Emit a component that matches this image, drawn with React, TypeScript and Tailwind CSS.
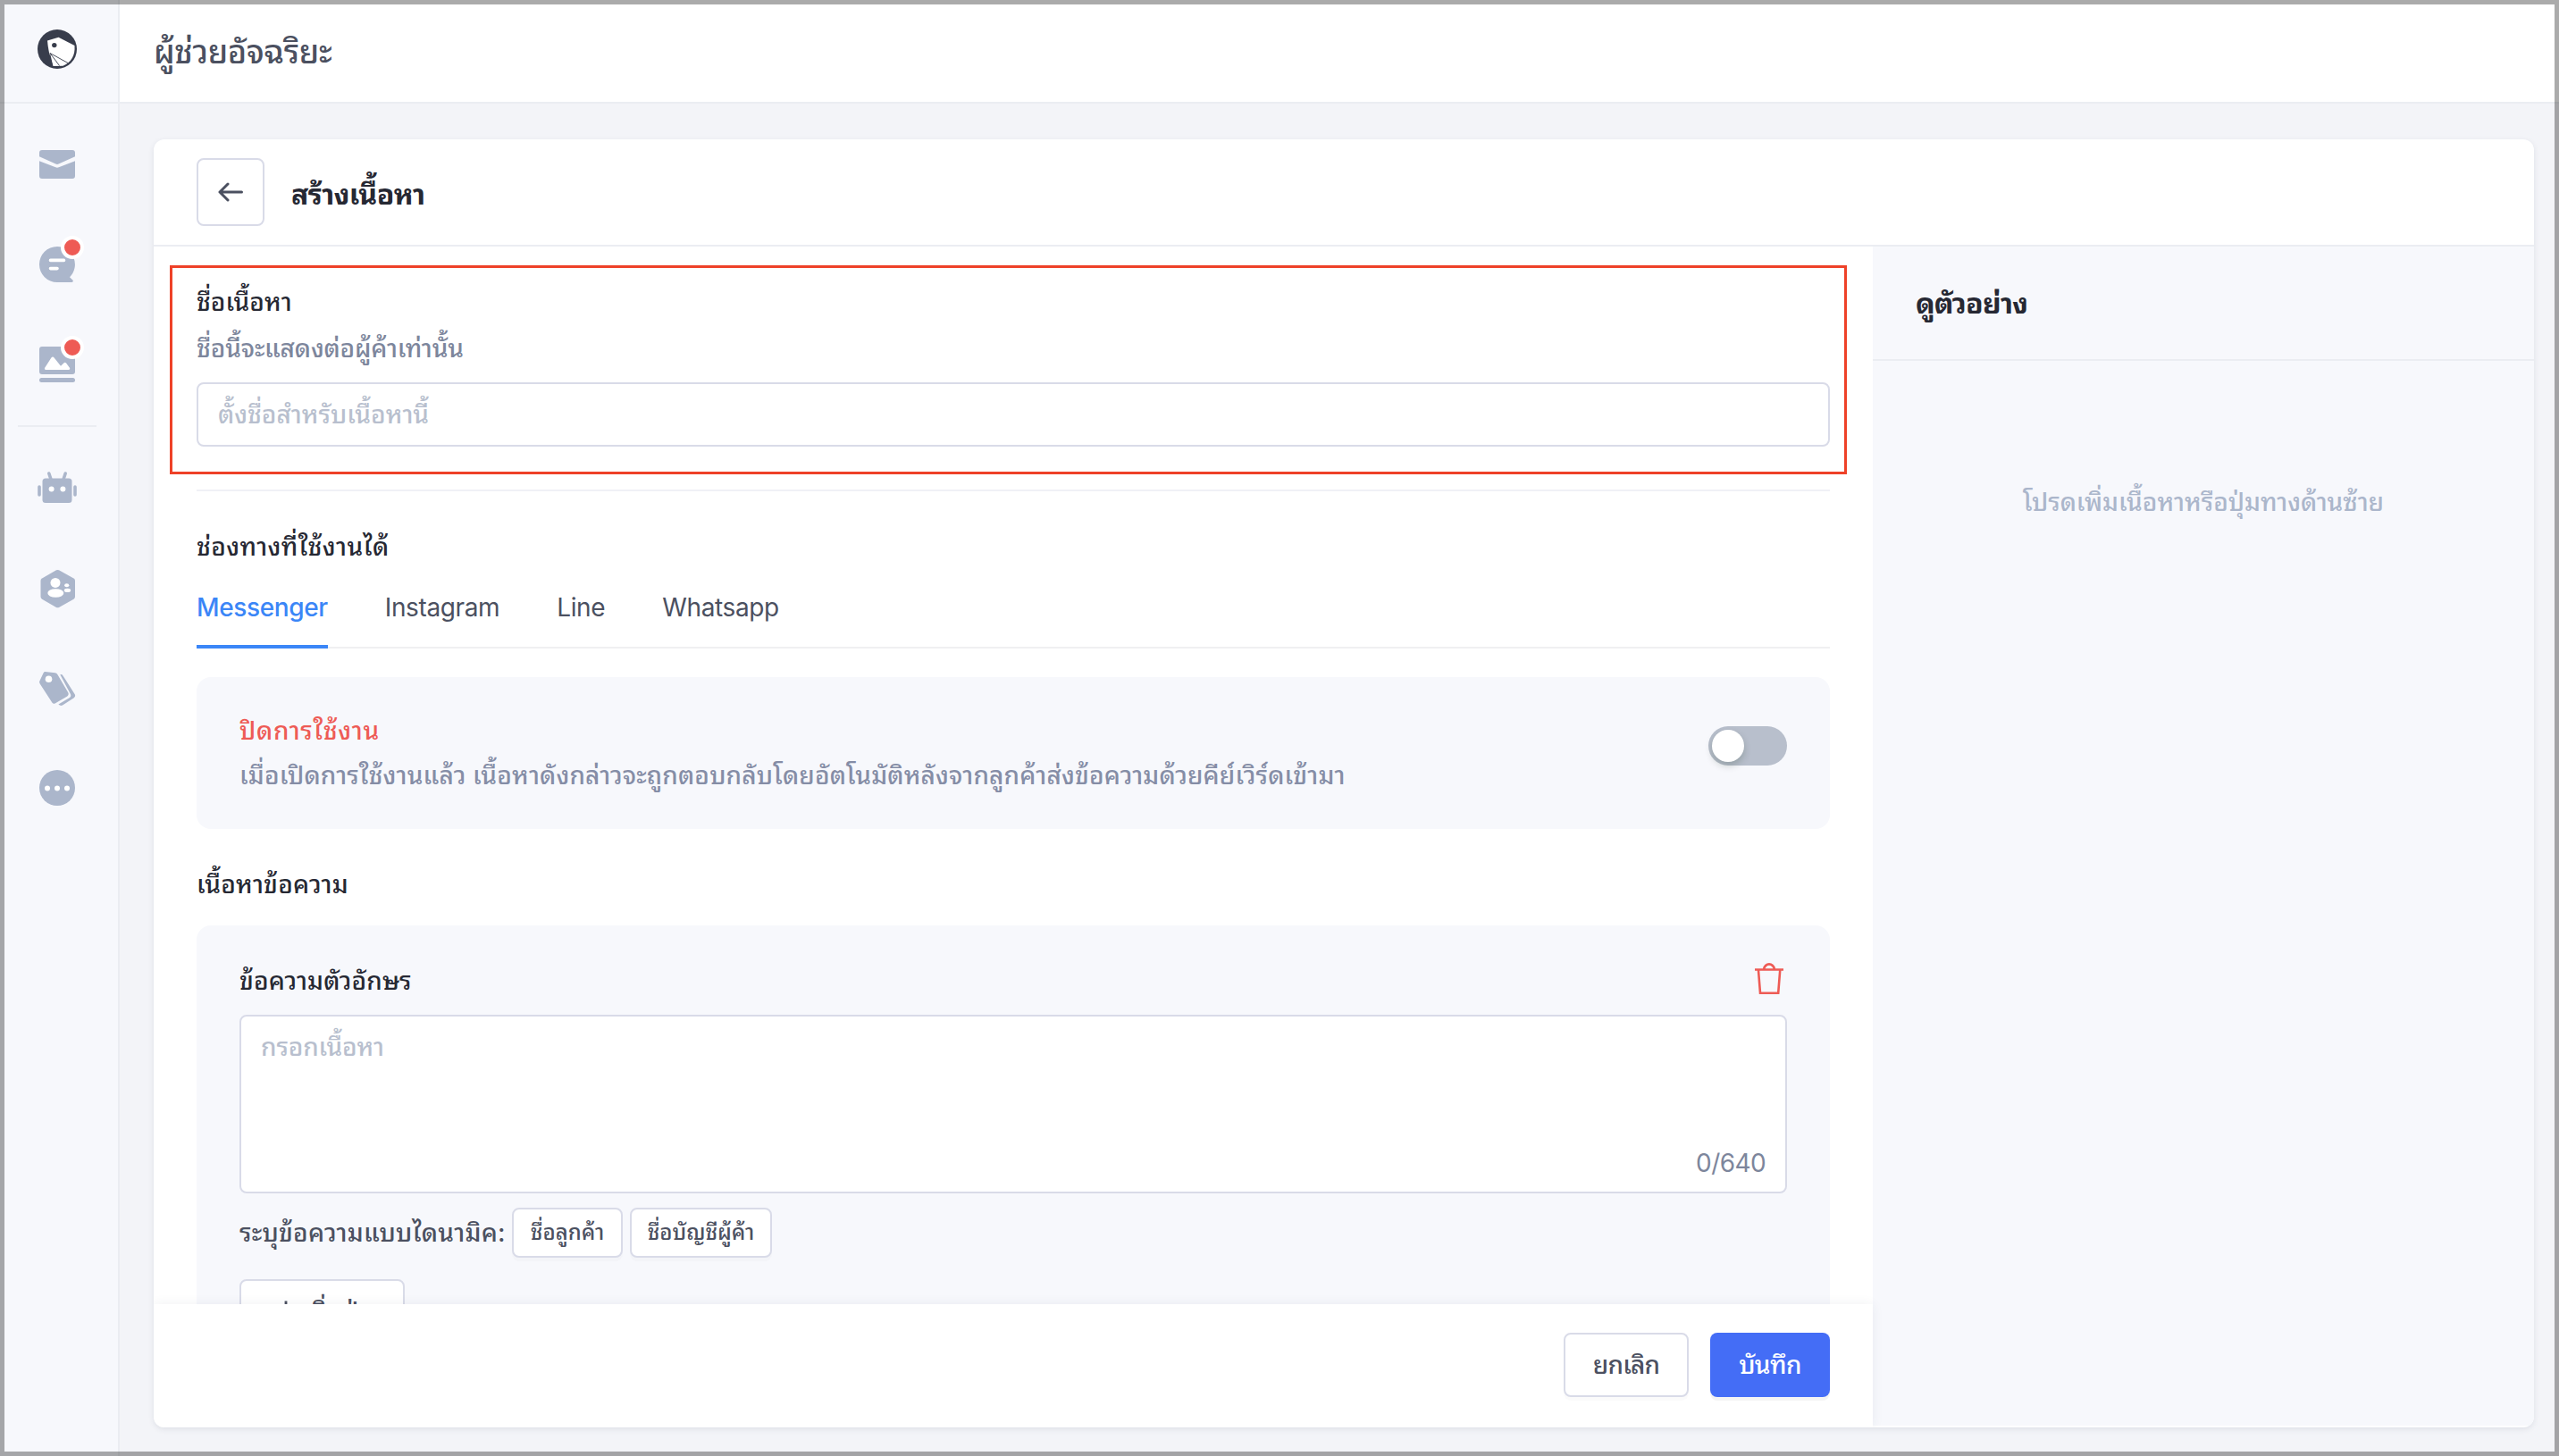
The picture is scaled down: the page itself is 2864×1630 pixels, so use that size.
import React, { useState } from 'react';

const TABS = ['Messenger', 'Instagram', 'Line', 'Whatsapp'];

const VARIABLES = [
    { label: 'ชื่อลูกค้า', box: 'w-[124px]' },
    { label: 'ชื่อบัญชีผู้ค้า', box: 'w-[159px]' }
];

const Logo = () => (
    <svg width="44" height="44" viewBox="0 0 44 44" fill="none">
        <circle cx="22" cy="22" r="22" fill="#383d4c" />
        <path d="M11 12.600 23.500 8.800 41.500 18Q42.600 34.500 28.500 40.800L17.300 41Q12 26 11 12.600Z" fill="#fff" />
        <circle cx="18.800" cy="17.600" r="2.700" fill="#383d4c" />
        <path d="M14 26.500 10.500 38 17.500 41.500Z" fill="#383d4c" />
        <path d="M14 26.500 24.500 40.500M14 26.500 34 37.500" stroke="#383d4c" strokeWidth="0.900" />
    </svg>
);

const MailIcon = () => (
    <svg width="44" height="44" viewBox="0 0 44 44" fill="#abb6cb">
        <path d="M2 9a3 3 0 0 1 3-3h34a3 3 0 0 1 3 3v4.300L23.600 21.600a4 4 0 0 1-3.200 0L2 13.300Z" />
        <path d="M2 18.200 20.200 25.300a5 5 0 0 0 3.600 0L42 18.200V35a3 3 0 0 1-3 3H5a3 3 0 0 1-3-3Z" />
    </svg>
);

const ChatIcon = () => (
    <svg width="44" height="44" viewBox="0 0 44 44">
        <path d="M22 2a20 20 0 1 0 0 40h16.400c1.400 0 1.900-1.600.9-2.600L36 36.200A20 20 0 0 0 22 2Z" fill="#abb6cb" />
        <path d="M14.500 17.400h15M14.500 26.600h7.500" stroke="#fff" strokeWidth="3.600" strokeLinecap="round" />
    </svg>
);

const ImageIcon = () => (
    <svg width="44" height="44" viewBox="0 0 44 44">
        <rect x="2" y="2" width="40" height="31" rx="3" fill="#abb6cb" />
        <path d="m8 26 7.400-11.600q1.600-2 3.200 0L26 23.800l3.600-3.600q1.300-1 2.500.4l4 5.400q.7 1.700-1 2H9q-1.700-.3-1-2Z" fill="#fff" />
        <rect x="2" y="37" width="40" height="5" rx="2.500" fill="#abb6cb" />
    </svg>
);

const BotIcon = () => (
    <svg width="44" height="44" viewBox="0 0 44 44">
        <rect x="5.500" y="11.500" width="33" height="27.500" rx="3.500" fill="#abb6cb" />
        <path d="m12.800 6 2 6M31.200 6l-2 6M2 21v9M42 21v9" stroke="#abb6cb" strokeWidth="3.600" strokeLinecap="round" />
        <circle cx="15.600" cy="23.600" r="3" fill="#fff" />
        <circle cx="28.400" cy="23.600" r="3" fill="#fff" />
    </svg>
);

const ContactsIcon = () => (
    <svg width="44" height="44" viewBox="0 0 44 44">
        <path d="M21 1.300q1.500-.8 3 0l16.500 9.200q1.500.9 1.500 2.600v18q0 1.700-1.500 2.600L24 42.900q-1.500.8-3 0L5 33.700q-1.500-.9-1.500-2.600v-18q0-1.700 1.500-2.600Z" fill="#abb6cb" />
        <g fill="#fff">
            <circle cx="20" cy="15.400" r="5.500" />
            <ellipse cx="20.300" cy="27" rx="9" ry="4.800" />
            <ellipse cx="32.700" cy="18.300" rx="2.600" ry="2" />
            <ellipse cx="33.500" cy="23.900" rx="3.700" ry="2.100" />
        </g>
    </svg>
);

const TagIcon = () => (
    <svg width="44" height="44" viewBox="0 0 44 44">
        <path d="M6.700 2.300Q7.200 1 8.600 1l11 1.200q1.800.3 2.700 1.800l11.800 20q1.500 2.800-.8 4.400L20 36.300q-2.200 1.300-3.700-.7L2.700 14.400q-.9-1.500-.4-3Z" fill="#abb6cb" />
        <path d="M25.300 4.300q2-.7 3.200 1.100l13.200 20.800q1.200 2.400-.9 4L28 38.500q-2.300 1.200-4.600-1l12.600-7.500q2-1.500.9-4Z" fill="#abb6cb" />
        <circle cx="12.500" cy="9.300" r="3.800" fill="#fff" />
    </svg>
);

const MoreIcon = () => (
    <svg width="44" height="44" viewBox="0 0 44 44">
        <circle cx="22" cy="22" r="20" fill="#abb6cb" />
        <circle cx="11" cy="22.500" r="3" fill="#fff" />
        <circle cx="22" cy="22.500" r="3" fill="#fff" />
        <circle cx="33" cy="22.500" r="3" fill="#fff" />
    </svg>
);

const BackIcon = () => (
    <svg width="28" height="22" viewBox="0 0 28 22" fill="none" stroke="#4b5060" strokeWidth="3" strokeLinecap="round" strokeLinejoin="round">
        <path d="M26.500 11H2M11 2 2 11l9 9" />
    </svg>
);

const PlusIcon = () => (
    <svg width="24" height="24" viewBox="0 0 24 24" stroke="#4b5060" strokeWidth="2.800">
        <path d="M12 .5v23M.5 12h23" />
    </svg>
);

const TrashIcon = () => (
    <svg width="32" height="36" viewBox="0 0 32 36" fill="none" stroke="#ee5b55" strokeWidth="2.600">
        <path d="M0 7.500h32M4 8.500l2 25.200h20.200l2-25.200M10 7q1.500-5.600 6-5.600T22 7" />
    </svg>
);

interface NavItemProps {
    icon: React.ReactNode;
    badge?: boolean;
}

const NavItem: React.FC<NavItemProps> = ({ icon, badge }) => (
    <button className="relative block h-11 w-11">
        {icon}
        {badge && <span className="absolute -top-[10px] left-[26px] h-[26px] w-[26px] rounded-full border-4 border-white bg-[#ee5b55]" />}
    </button>
);

const App: React.FC = () => {
    const [activeTab, setActiveTab] = useState('Messenger');
    const [enabled, setEnabled] = useState(false);
    const [name, setName] = useState('');
    const [message, setMessage] = useState('');

    return (
        <div className="relative flex h-[1630px] w-[2864px] overflow-hidden bg-[#f3f4f8] font-[Inter,'Noto_Sans_Thai_Looped',sans-serif] text-[28px] leading-10 font-medium text-[#4b5060]">
            <aside className="flex w-[134px] shrink-0 flex-col border-r-2 border-[#ebedf2] bg-[#f7f8fc]">
                <div className="h-[116px] border-b-2 border-[#ebedf2] pt-[33px] pl-[42px]">
                    <Logo />
                </div>
                <nav className="flex flex-col pt-[46px] pl-[42px]">
                    <NavItem icon={<MailIcon />} />
                    <div className="h-[68px]" />
                    <NavItem icon={<ChatIcon />} badge />
                    <div className="h-[68px]" />
                    <NavItem icon={<ImageIcon />} badge />
                    <div className="mt-[46px] -ml-[22px] h-[2px] w-[88px] bg-[#ebedf2]" />
                    <div className="h-[46px]" />
                    <NavItem icon={<BotIcon />} />
                    <div className="h-[69px]" />
                    <NavItem icon={<ContactsIcon />} />
                    <div className="h-[70px]" />
                    <NavItem icon={<TagIcon />} />
                    <div className="h-[65px]" />
                    <NavItem icon={<MoreIcon />} />
                </nav>
            </aside>

            <div className="flex flex-1 flex-col">
                <header className="flex h-[116px] items-center border-b-2 border-[#ebedf2] bg-white pt-[2px] pl-[38px]">
                    <h1 className="text-[36px] tracking-[-0.3px]">ผู้ช่วยอัจฉริยะ</h1>
                </header>

                <main className="mt-10 mr-7 ml-[38px] flex h-[1442px] flex-col overflow-hidden rounded-xl bg-white shadow-[0_2px_6px_rgba(40,50,80,0.1)]">
                    <div className="flex h-[120px] shrink-0 items-center border-b-2 border-[#ebedf2] pl-12">
                        <button className="flex h-[76px] w-[76px] items-center justify-center rounded-lg border-2 border-[#d9dbe8] bg-white">
                            <BackIcon />
                        </button>
                        <h2 className="mt-[6px] ml-[30px] text-[32px] font-bold tracking-[-0.6px] text-[#262833]">สร้างเนื้อหา</h2>
                    </div>

                    <div className="flex min-h-0 flex-1">
                        <div className="flex w-[1924px] flex-col">
                            <div className="h-[1184px] overflow-hidden px-[18px] pt-[21px]">
                                <section className="h-[234px] w-[1877px] border-[3px] border-[#ee4128] px-[27px] pt-[18px]">
                                    <label className="block text-[#262833]">ชื่อเนื้อหา</label>
                                    <p className="mt-3 tracking-[-0.15px] text-[#7d869c]">ชื่อนี้จะแสดงต่อผู้ค้าเท่านั้น</p>
                                    <input
                                        value={name}
                                        onChange={(e) => setName(e.target.value)}
                                        placeholder="ตั้งชื่อสำหรับเนื้อหานี้"
                                        className="mt-[18px] h-[72px] w-[1828px] rounded-lg border-2 border-[#d9dbe8] bg-white px-[22px] placeholder:text-[#b8bfce]"
                                    />
                                </section>

                                <div className="mt-[17px] px-[30px]">
                                    <div className="h-[2px] bg-[#f0f1f6]" />
                                    <h3 className="mt-[42px] tracking-[0.4px] text-[#262833]">ช่องทางที่ใช้งานได้</h3>

                                    <div className="mt-7 flex h-[66px] gap-16 border-b-2 border-[#f0f0f2] tracking-[-0.37px]">
                                        {TABS.map((tab) => (
                                            <button
                                                key={tab}
                                                onClick={() => setActiveTab(tab)}
                                                className={`h-[66px] border-b-4 pb-[22px] ${activeTab === tab ? 'border-[#3b86f7] text-[#3b86f7]' : 'border-transparent font-normal'}`}
                                            >
                                                {tab}
                                            </button>
                                        ))}
                                    </div>

                                    <div className="mt-8 flex h-[170px] justify-between rounded-2xl bg-[#f7f8fc] px-12">
                                        <div className="pt-10">
                                            <p className="tracking-[0.7px] text-[#ee5b55]">ปิดการใช้งาน</p>
                                            <p className="mt-[10px] tracking-[0.17px] text-[#858da6]">เมื่อเปิดการใช้งานแล้ว เนื้อหาดังกล่าวจะถูกตอบกลับโดยอัตโนมัติหลังจากลูกค้าส่งข้อความด้วยคีย์เวิร์ดเข้ามา</p>
                                        </div>
                                        <button
                                            onClick={() => setEnabled(!enabled)}
                                            className={`mt-[55px] flex h-11 w-[88px] rounded-full p-1 ${enabled ? 'justify-end bg-[#446df6]' : 'bg-[#b8bfcc]'}`}
                                        >
                                            <span className="h-9 w-9 rounded-full bg-white shadow-[0_4px_8px_rgba(0,35,11,0.2)]" />
                                        </button>
                                    </div>

                                    <h3 className="mt-[42px] tracking-[0.2px] text-[#262833]">เนื้อหาข้อความ</h3>

                                    <div className="mt-[26px] h-[500px] rounded-2xl bg-[#f7f8fc] px-12 pt-[42px]">
                                        <div className="flex h-10 justify-between pr-1">
                                            <h4 className="tracking-[0.1px] text-[#262833]">ข้อความตัวอักษร</h4>
                                            <button className="h-9"><TrashIcon /></button>
                                        </div>
                                        <div className="relative mt-[18px] h-[200px]">
                                            <textarea
                                                value={message}
                                                onChange={(e) => setMessage(e.target.value)}
                                                placeholder="กรอกเนื้อหา"
                                                className="block h-full w-full resize-none rounded-lg border-2 border-[#d9dbe8] bg-white px-[22px] py-[14px] tracking-[-0.15px] placeholder:text-[#b8bfce]"
                                            />
                                            <span className="absolute right-6 bottom-[14px] font-normal tracking-[-0.6px] text-[#7d869c]">{message.length}/640</span>
                                        </div>
                                        <div className="mt-4 flex items-center">
                                            <span className="w-[305px] tracking-[0.25px] whitespace-nowrap">ระบุข้อความแบบไดนามิค:</span>
                                            <div className="flex gap-2">
                                                {VARIABLES.map((v) => (
                                                    <button
                                                        key={v.label}
                                                        className={`${v.box} h-14 rounded-lg border-2 border-[#d9dbe8] bg-white text-2xl whitespace-nowrap shadow-[0_4px_0_rgba(0,0,0,0.015)]`}
                                                    >
                                                        {v.label}
                                                    </button>
                                                ))}
                                            </div>
                                        </div>
                                        <button className="mt-6 flex h-[72px] w-[185px] items-center rounded-lg border-2 border-[#d9dbe8] bg-white pl-[38px]">
                                            <PlusIcon />
                                            <span className="ml-1">เพิ่มปุ่ม</span>
                                        </button>
                                    </div>
                                </div>
                            </div>

                            <footer className="relative flex h-[138px] justify-end gap-6 bg-white pt-8 pr-12 shadow-[0_0_12px_rgba(40,50,80,0.07)]">
                                <button className="h-[72px] w-[140px] rounded-lg border-2 border-[#d9dbe8] bg-white tracking-[-0.8px] shadow-[0_4px_0_rgba(0,0,0,0.015)]">ยกเลิก</button>
                                <button className="h-[72px] w-[134px] rounded-lg bg-[#446df6] tracking-[-0.6px] text-white shadow-[0_4px_0_rgba(0,0,0,0.045)]">บันทึก</button>
                            </footer>
                        </div>

                        <aside className="mb-[2px] flex-1 bg-[#f7f8fc]">
                            <div className="flex h-32 items-center border-b-2 border-[#ebedf2] pt-[2px] pl-12">
                                <h3 className="text-[32px] font-bold tracking-[-0.8px] text-[#262833]">ดูตัวอย่าง</h3>
                            </div>
                            <p className="mt-[138px] text-center text-[#abb6cb]">โปรดเพิ่มเนื้อหาหรือปุ่มทางด้านซ้าย</p>
                        </aside>
                    </div>
                </main>
            </div>

            <div className="pointer-events-none absolute inset-0 border-[5px] border-black/33" />
        </div>
    );
};

export default App;
